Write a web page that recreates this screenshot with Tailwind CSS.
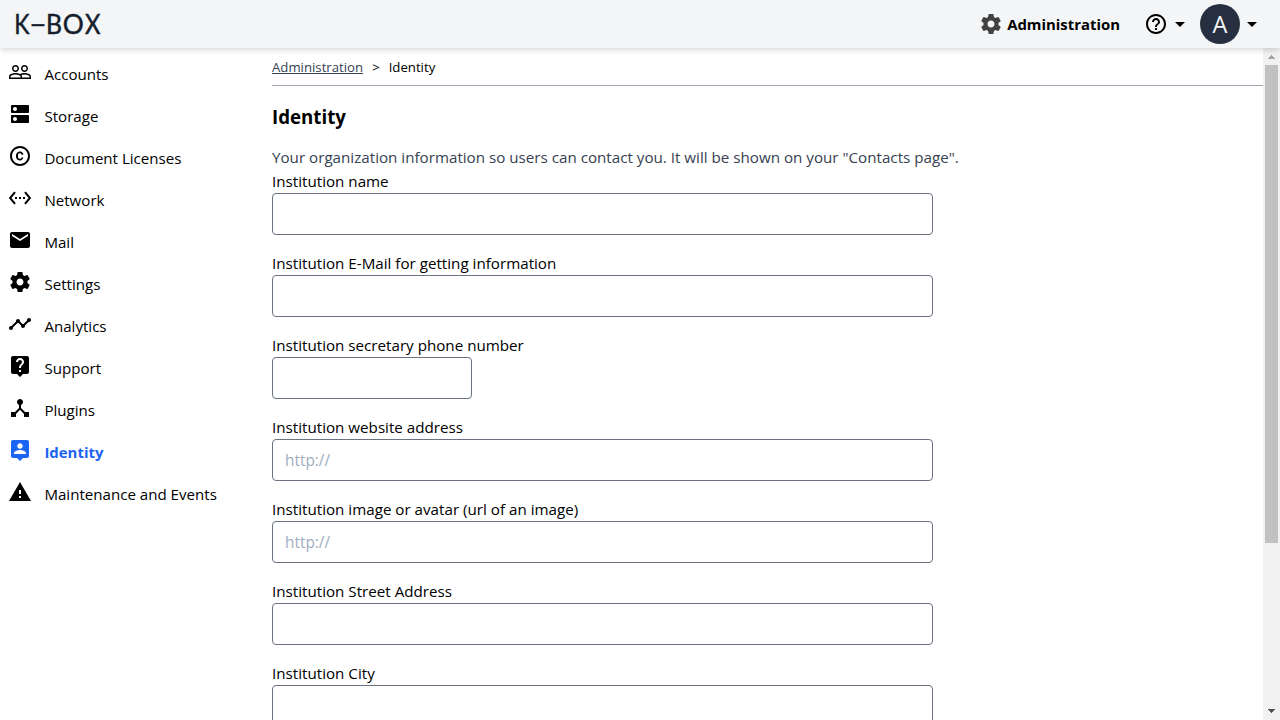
<!DOCTYPE html>
<html lang="en">
<head>
<meta charset="utf-8">
<title>Identity - K-Box</title>
<script src="https://cdn.jsdelivr.net/npm/@tailwindcss/browser@4"></script>
</head>
<body class="flex h-screen flex-col overflow-hidden bg-white font-['Open_Sans',sans-serif] text-[15.18px] leading-6 text-black">
<header class="relative z-10 flex h-12 shrink-0 items-center justify-between bg-[#f4f5f7] pr-4 shadow-[0_4px_6px_-1px_rgba(0,0,0,0.1),0_2px_4px_-1px_rgba(0,0,0,0.06)]">
  <svg class="h-12 w-28" viewBox="0 0 112 48" role="img" aria-label="K-Box" font-family="Lato" font-size="26.4" fill="#161e2e" stroke="#161e2e" stroke-width="0.5">
    <text x="14.3" y="33.6" textLength="15.2" lengthAdjust="spacingAndGlyphs">K</text>
    <text x="30.4" y="33.1" textLength="14.9" lengthAdjust="spacingAndGlyphs">—</text>
    <text x="45.9" y="33.6" textLength="16" lengthAdjust="spacingAndGlyphs">B</text>
    <text x="62.7" y="33.6" textLength="21" lengthAdjust="spacingAndGlyphs">O</text>
    <text x="84.9" y="33.6" textLength="15.4" lengthAdjust="spacingAndGlyphs">X</text>
  </svg>
  <div class="flex items-center">
    <a class="flex items-center gap-1 text-[14.9px] font-bold"><svg class="size-6 text-[#424242]" viewBox="0 0 24 24" fill="currentColor"><path d="M19.43 12.98c.04-.32.07-.64.07-.98s-.03-.66-.07-.98l2.11-1.65c.19-.15.24-.42.12-.64l-2-3.46c-.12-.22-.39-.3-.61-.22l-2.49 1c-.52-.4-1.08-.73-1.69-.98l-.38-2.65C14.46 2.18 14.25 2 14 2h-4c-.25 0-.46.18-.49.42l-.38 2.65c-.61.25-1.17.59-1.69.98l-2.49-1c-.23-.09-.49 0-.61.22l-2 3.46c-.13.22-.07.49.12.64l2.11 1.65c-.04.32-.07.65-.07.98s.03.66.07.98l-2.11 1.65c-.19.15-.24.42-.12.64l2 3.46c.12.22.39.3.61.22l2.49-1c.52.4 1.08.73 1.69.98l.38 2.65c.03.24.24.42.49.42h4c.25 0 .46-.18.49-.42l.38-2.65c.61-.25 1.17-.59 1.69-.98l2.49 1c.23.09.49 0 .61-.22l2-3.46c.12-.22.07-.49-.12-.64l-2.11-1.65zM12 15.5c-1.93 0-3.5-1.57-3.5-3.5s1.57-3.5 3.5-3.5 3.5 1.57 3.5 3.5-1.57 3.5-3.5 3.5z"/></svg>Administration</a>
    <div class="ml-6 flex items-center">
      <svg class="size-6" viewBox="0 0 24 24"><path d="M11 18h2v-2h-2v2zm1-16C6.48 2 2 6.48 2 12s4.48 10 10 10 10-4.48 10-10S17.52 2 12 2zm0 18c-4.41 0-8-3.59-8-8s3.59-8 8-8 8 3.59 8 8-3.59 8-8 8zm0-14c-2.21 0-4 1.79-4 4h2c0-1.1.9-2 2-2s2 .9 2 2c0 2-3 1.75-3 5h2c0-2.25 3-2.5 3-5 0-2.21-1.79-4-4-4z"/></svg>
      <svg class="size-6" viewBox="0 0 24 24"><path d="M7 10l5 5 5-5z"/></svg>
    </div>
    <div class="ml-2 flex items-center">
      <span class="flex size-10 items-center justify-center rounded-full bg-[#252f3f] pb-px text-[23.5px] text-[#f4f5f7]">A</span>
      <svg class="size-6" viewBox="0 0 24 24"><path d="M7 10l5 5 5-5z"/></svg>
    </div>
  </div>
</header>
<div class="flex min-h-0 flex-1">
  <nav class="w-64 shrink-0 pt-[5px] pl-2 text-[15.1px] [&>a]:flex [&>a]:h-[42px] [&>a]:items-center [&>a]:gap-[12.4px] [&_svg]:mb-1 [&_svg]:size-6 [&_svg]:fill-current">
    <a><svg viewBox="0 0 24 24"><path d="M16.5 13c-1.2 0-3.07.34-4.5 1-1.43-.67-3.3-1-4.5-1C5.33 13 1 14.08 1 16.25V19h22v-2.75c0-2.17-4.33-3.25-6.5-3.25zm-4 4.5h-10v-1.25c0-.54 2.56-1.75 5-1.75s5 1.21 5 1.75v1.25zm9 0H14v-1.25c0-.46-.2-.86-.52-1.22.88-.3 1.96-.53 3.02-.53 2.44 0 5 1.21 5 1.75v1.25zM7.5 12c1.93 0 3.5-1.57 3.5-3.5S9.43 5 7.5 5 4 6.57 4 8.5 5.57 12 7.5 12zm0-5.5c1.1 0 2 .9 2 2s-.9 2-2 2-2-.9-2-2 .9-2 2-2zm9 5.5c1.93 0 3.5-1.57 3.5-3.5S18.43 5 16.5 5 13 6.57 13 8.5s1.57 3.5 3.5 3.5zm0-5.5c1.1 0 2 .9 2 2s-.9 2-2 2-2-.9-2-2 .9-2 2-2z"/></svg>Accounts</a>
    <a><svg viewBox="0 0 24 24"><path d="M20 13H4c-.55 0-1 .45-1 1v6c0 .55.45 1 1 1h16c.55 0 1-.45 1-1v-6c0-.55-.45-1-1-1zM7 19c-1.1 0-2-.9-2-2s.9-2 2-2 2 .9 2 2-.9 2-2 2zM20 3H4c-.55 0-1 .45-1 1v6c0 .55.45 1 1 1h16c.55 0 1-.45 1-1V4c0-.55-.45-1-1-1zM7 9c-1.1 0-2-.9-2-2s.9-2 2-2 2 .9 2 2-.9 2-2 2z"/></svg>Storage</a>
    <a><svg viewBox="0 0 24 24"><path d="M10.08 10.86c.05-.33.16-.62.3-.87s.34-.46.59-.62c.24-.15.54-.22.91-.23.23.01.44.05.63.13.2.09.38.21.52.36s.25.33.34.53.13.42.14.64h1.79c-.02-.47-.11-.9-.28-1.29s-.4-.73-.7-1.01-.66-.5-1.08-.66-.88-.23-1.39-.23c-.65 0-1.22.11-1.7.34s-.88.53-1.2.92-.56.84-.71 1.36S8 11.29 8 11.87v.27c0 .58.08 1.12.23 1.64s.39.97.71 1.35.72.69 1.2.91 1.05.34 1.7.34c.47 0 .91-.08 1.32-.23s.77-.36 1.08-.63.56-.58.74-.94.29-.74.3-1.15h-1.79c-.01.21-.06.4-.15.58s-.21.33-.36.46-.32.23-.52.3c-.19.07-.39.09-.6.1-.36-.01-.66-.08-.89-.23-.25-.16-.45-.37-.59-.62s-.25-.55-.3-.88-.08-.67-.08-1v-.27c0-.35.03-.68.08-1.01zM12 2C6.48 2 2 6.48 2 12s4.48 10 10 10 10-4.48 10-10S17.52 2 12 2zm0 18c-4.41 0-8-3.59-8-8s3.59-8 8-8 8 3.59 8 8-3.59 8-8 8z"/></svg>Document Licenses</a>
    <a><svg viewBox="0 0 24 24"><path d="M7.77 6.76L6.23 5.48.82 12l5.41 6.52 1.54-1.28L3.42 12l4.35-5.24zM7 13h2v-2H7v2zm10-2h-2v2h2v-2zm-6 2h2v-2h-2v2zm6.77-7.52l-1.54 1.28L20.58 12l-4.35 5.24 1.54 1.28L23.18 12l-5.41-6.52z"/></svg>Network</a>
    <a><svg viewBox="0 0 24 24"><path d="M20 4H4c-1.1 0-1.99.9-1.99 2L2 18c0 1.1.9 2 2 2h16c1.1 0 2-.9 2-2V6c0-1.1-.9-2-2-2zm0 4l-8 5-8-5V6l8 5 8-5v2z"/></svg>Mail</a>
    <a><svg viewBox="0 0 24 24"><path d="M19.43 12.98c.04-.32.07-.64.07-.98s-.03-.66-.07-.98l2.11-1.65c.19-.15.24-.42.12-.64l-2-3.46c-.12-.22-.39-.3-.61-.22l-2.49 1c-.52-.4-1.08-.73-1.69-.98l-.38-2.65C14.46 2.18 14.25 2 14 2h-4c-.25 0-.46.18-.49.42l-.38 2.65c-.61.25-1.17.59-1.69.98l-2.49-1c-.23-.09-.49 0-.61.22l-2 3.46c-.13.22-.07.49.12.64l2.11 1.65c-.04.32-.07.65-.07.98s.03.66.07.98l-2.11 1.65c-.19.15-.24.42-.12.64l2 3.46c.12.22.39.3.61.22l2.49-1c.52.4 1.08.73 1.69.98l.38 2.65c.03.24.24.42.49.42h4c.25 0 .46-.18.49-.42l.38-2.65c.61-.25 1.17-.59 1.69-.98l2.49 1c.23.09.49 0 .61-.22l2-3.46c.12-.22.07-.49-.12-.64l-2.11-1.65zM12 15.5c-1.93 0-3.5-1.57-3.5-3.5s1.57-3.5 3.5-3.5 3.5 1.57 3.5 3.5-1.57 3.5-3.5 3.5z"/></svg>Settings</a>
    <a><svg viewBox="0 0 24 24"><path d="M23 8c0 1.1-.9 2-2 2-.18 0-.35-.02-.51-.07l-3.56 3.55c.05.16.07.34.07.52 0 1.1-.9 2-2 2s-2-.9-2-2c0-.18.02-.36.07-.52l-2.55-2.55c-.16.05-.34.07-.52.07s-.36-.02-.52-.07l-4.55 4.56c.05.16.07.33.07.51 0 1.1-.9 2-2 2s-2-.9-2-2 .9-2 2-2c.18 0 .35.02.51.07l4.56-4.55C8.02 9.36 8 9.18 8 9c0-1.1.9-2 2-2s2 .9 2 2c0 .18-.02.36-.07.52l2.55 2.55c.16-.05.34-.07.52-.07s.36.02.52.07l3.55-3.56C19.02 8.35 19 8.18 19 8c0-1.1.9-2 2-2s2 .9 2 2z"/></svg>Analytics</a>
    <a><svg viewBox="0 0 24 24"><path d="M19 2H5c-1.11 0-2 .9-2 2v14c0 1.1.89 2 2 2h4l3 3 3-3h4c1.1 0 2-.9 2-2V4c0-1.1-.9-2-2-2zm-6 16h-2v-2h2v2zm2.07-7.75l-.9.92C13.45 11.9 13 12.5 13 14h-2v-.5c0-1.1.45-2.1 1.17-2.83l1.24-1.26c.37-.36.59-.86.59-1.41 0-1.1-.9-2-2-2s-2 .9-2 2H8c0-2.21 1.79-4 4-4s4 1.79 4 4c0 .88-.36 1.68-.93 2.25z"/></svg>Support</a>
    <a><svg viewBox="0 0 24 24"><path d="M17 16l-4-4V8.82C14.16 8.4 15 7.3 15 6c0-1.66-1.34-3-3-3S9 4.34 9 6c0 1.3.84 2.4 2 2.82V12l-4 4H3v5h5v-3.05l4-4.2 4 4.2V21h5v-5h-4z"/></svg>Plugins</a>
    <a class="text-[14.95px] font-bold text-[#1c64f2]"><svg viewBox="0 0 24 24"><path d="M19 2H5c-1.11 0-2 .9-2 2v14c0 1.1.89 2 2 2h4l3 3 3-3h4c1.1 0 2-.9 2-2V4c0-1.1-.9-2-2-2zm-7 3.3c1.49 0 2.7 1.21 2.7 2.7 0 1.49-1.21 2.7-2.7 2.7-1.49 0-2.7-1.21-2.7-2.7 0-1.49 1.21-2.7 2.7-2.7zM18 16H6v-.9c0-2 4-3.1 6-3.1s6 1.1 6 3.1v.9z"/></svg>Identity</a>
    <a><svg viewBox="0 0 24 24"><path d="M1 21h22L12 2 1 21zm12-3h-2v-2h2v2zm0-4h-2v-4h2v4z"/></svg>Maintenance and Events</a>
  </nav>
  <main class="min-w-0 flex-1 overflow-hidden pl-4">
    <div class="flex h-[38px] items-center border-b border-[#9fa6b2] text-[13.2px]"><a class="text-[#374151] underline">Administration</a><span class="mx-[9px]">&gt;</span><span>Identity</span></div>
    <h1 class="pt-4 text-[18.7px] leading-[30px] font-bold">Identity</h1>
    <p class="mt-[13px] text-[#374151]">Your organization information so users can contact you. It will be shown on your "Contacts page".</p>
    <form class="flex w-[661px] flex-col gap-4 [&_input]:block [&_input]:h-[42px] [&_input]:w-full [&_input]:rounded [&_input]:border [&_input]:border-[#6b7280] [&_input]:px-3 [&_input]:text-[15.4px] [&_input]:placeholder:text-[#a0aec0]">
      <label>Institution name<input type="text"></label>
      <label>Institution E-Mail for getting information<input type="text"></label>
      <label>Institution secretary phone number<span class="block w-[200px]"><input type="text"></span></label>
      <label>Institution website address<input type="text" placeholder="http://"></label>
      <label>Institution image or avatar (url of an image)<input type="text" placeholder="http://"></label>
      <label>Institution Street Address<input type="text"></label>
      <label>Institution City<input type="text"></label>
    </form>
  </main>
  <div class="flex w-[17px] shrink-0 flex-col items-center bg-[#f1f1f1]">
    <svg class="h-[17px] w-[17px] shrink-0" viewBox="0 0 17 17" shape-rendering="crispEdges"><path fill="#a3a3a3" d="M8 7h1v1h1v1h1v1h1v1H5v-1h1V9h1V8h1z"/></svg>
    <div class="h-[478px] w-[13px] bg-[#c1c1c1]"></div>
    <svg class="mt-auto h-[17px] w-[17px] shrink-0" viewBox="0 0 17 17" shape-rendering="crispEdges"><path fill="#505050" d="M5 6h7v1h-1v1h-1v1H9v1H8V9H7V8H6V7H5z"/></svg>
  </div>
</div>
</body>
</html>
